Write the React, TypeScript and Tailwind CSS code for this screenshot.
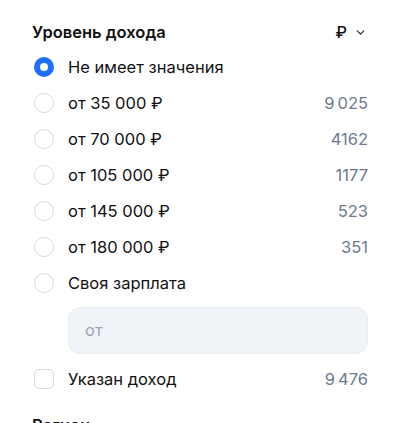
import { ChevronDown } from "lucide-react";

const options = [
  { label: "Не имеет значения", count: null, checked: true },
  { label: "от 35 000 ₽", count: "9\u2009025", checked: false },
  { label: "от 70 000 ₽", count: "4162", checked: false },
  { label: "от 105 000 ₽", count: "1177", checked: false },
  { label: "от 145 000 ₽", count: "523", checked: false },
  { label: "от 180 000 ₽", count: "351", checked: false },
  { label: "Своя зарплата", count: null, checked: false },
];

function Radio({ checked }: { checked: boolean }) {
  if (checked) {
    return <span className="w-5 h-5 rounded-full border-[6px] border-[#1f6fff] bg-white shrink-0" />;
  }
  return <span className="w-5 h-5 rounded-full border border-[#d3dae4] bg-white shrink-0" />;
}

export default function App() {
  return (
    <div
      className="bg-white w-[413px] h-[423px] overflow-hidden pl-8 pr-[45px] pt-[21px] text-[#111]"
      style={{ fontFamily: "Inter, 'Noto Sans', sans-serif" }}
    >
      <div className="flex items-center justify-between h-[22px]">
        <h3 className="text-[16.5px] font-semibold">Уровень дохода</h3>
        <div className="flex items-center gap-[7px] pr-[1px]">
          <span className="text-[16px] font-medium">₽</span>
          <ChevronDown size={13} strokeWidth={2} className="text-[#222]" />
        </div>
      </div>

      <div className="mt-[6px] flex flex-col">
        {options.map((o) => (
          <label key={o.label} className="flex items-center h-9 pl-[2px] gap-[14px]">
            <Radio checked={o.checked} />
            <span className="flex-1 text-[16.5px]">{o.label}</span>
            {o.count && <span className="text-[16.5px] text-[#6c7a8d]">{o.count}</span>}
          </label>
        ))}
      </div>

      <div className="ml-9 mt-[6px] h-[47px] rounded-xl bg-[#f0f3f8] border border-[#e9edf3] flex items-center px-4">
        <span className="text-[16.5px] text-[#9ba6b5]">от</span>
      </div>

      <label className="flex items-center h-9 pl-[2px] gap-[14px] mt-[7px]">
        <span className="w-5 h-5 rounded-[5px] border border-[#d3dae4] bg-white shrink-0" />
        <span className="flex-1 text-[16.5px]">Указан доход</span>
        <span className="text-[16.5px] text-[#6c7a8d]">{"9\u2009476"}</span>
      </label>

      <h3 className="mt-[16px] text-[16.5px] font-semibold">Регион</h3>
    </div>
  );
}
